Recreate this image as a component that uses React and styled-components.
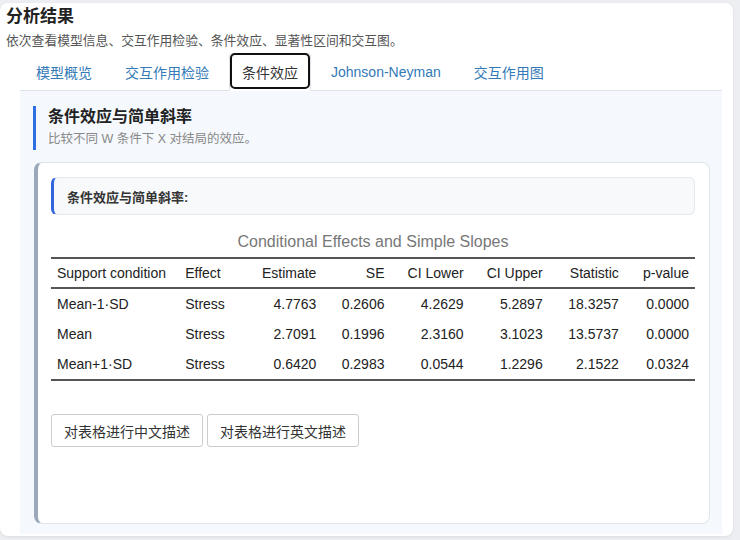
import React from "react";
import styled, { createGlobalStyle } from "styled-components";

const GlobalStyle = createGlobalStyle`
  html, body {
    margin: 0;
    padding: 0;
    background: #eceef1;
  }
  body {
    font-family: "Liberation Sans", "Noto Sans CJK SC", sans-serif;
    color: #222;
  }
`;

const Page = styled.div`
  height: 540px;
  display: flex;
  flex-direction: column;
  padding: 3px 7px 4px 0;
  box-sizing: border-box;
`;

const Card = styled.div`
  flex: 1;
  display: flex;
  flex-direction: column;
  background: #fff;
  border-radius: 8px;
  box-shadow: 0 1px 3px rgba(0, 0, 0, 0.08);
  padding: 3px 11px 2px 6px;
`;

const Title = styled.h2`
  margin: 0;
  font-size: 17px;
  line-height: 22px;
  font-weight: 700;
  color: #222;
`;

const Subtitle = styled.p`
  margin: 3px 0 0;
  font-size: 12.8px;
  line-height: 20px;
  color: #555;
`;

const TabArea = styled.div`
  flex: 1;
  display: flex;
  flex-direction: column;
  margin: 2px 0 0 14px;
`;

const TabList = styled.div`
  display: flex;
  gap: 7px;
  padding-left: 3px;
  border-bottom: 1px solid #dde2e8;
  height: 37px;
`;

const Tab = styled.div`
  position: relative;
  height: 38px;
  box-sizing: border-box;
  padding: 0 12px 1px;
  display: flex;
  align-items: center;
  font-size: 14px;
  color: ${(p) => (p.$active ? "#333" : "#337ab7")};
  background: ${(p) => (p.$active ? "#fff" : "transparent")};
  border: 1px solid ${(p) => (p.$active ? "#dde2e8" : "transparent")};
  border-bottom-color: transparent;
  border-radius: 4px 4px 0 0;
  margin-bottom: -1px;
  white-space: nowrap;

  &::after {
    content: "";
    display: ${(p) => (p.$active ? "block" : "none")};
    position: absolute;
    top: -1px;
    left: 0;
    right: 0;
    bottom: 1px;
    border: 2px solid #111;
    border-radius: 5px;
  }
`;

const Panel = styled.div`
  flex: 1;
  display: flex;
  flex-direction: column;
  background: #f5f9fd;
  padding: 15px 12px 10px 13px;
`;

const SectionHead = styled.div`
  border-left: 3px solid #2f6fe0;
  padding-left: 12px;
`;

const SectionTitle = styled.h3`
  margin: 0;
  font-size: 16px;
  line-height: 22px;
  font-weight: 700;
  color: #222;
`;

const SectionSub = styled.p`
  margin: 0;
  font-size: 12.5px;
  line-height: 22px;
  color: #888;
`;

const ResultCard = styled.div`
  flex: 1;
  margin-top: 12px;
  margin-left: 1px;
  background: #fff;
  border: 1px solid #dfe4ea;
  border-left: 4px solid #9aa8ba;
  border-radius: 8px;
  padding: 14px 14px 13px 13px;
`;

const Note = styled.div`
  height: 38px;
  box-sizing: border-box;
  display: flex;
  align-items: center;
  padding-left: 13px;
  background: #f8f9fb;
  border: 1px solid #e4e8ee;
  border-left: 3px solid #3366dd;
  border-radius: 6px;
  font-size: 13px;
  font-weight: 700;
  color: #333;
`;

const Table = styled.table`
  width: 100%;
  margin-top: 16px;
  border-collapse: collapse;
  table-layout: fixed;
  font-size: 14px;
  color: #222;
`;

const Caption = styled.caption`
  font-size: 16px;
  line-height: 22px;
  color: #777;
  padding-bottom: 4px;
`;

const HeadRow = styled.tr`
  border-top: 2px solid #555;
  border-bottom: 2px solid #555;
`;

const Th = styled.th`
  font-weight: 400;
  height: 28px;
  padding: 0 6px;
  text-align: ${(p) => (p.$left ? "left" : "right")};
  white-space: nowrap;
`;

const Row = styled.tr`
  border-bottom: ${(p) => (p.$last ? "2px solid #555" : "none")};
`;

const Td = styled.td`
  height: 30px;
  padding: 0 6px;
  text-align: ${(p) => (p.$left ? "left" : "right")};
  white-space: nowrap;
`;

const Actions = styled.div`
  display: flex;
  gap: 4px;
  margin-top: 33px;
`;

const Button = styled.button`
  height: 33px;
  padding: 0 12px;
  background: #fff;
  border: 1px solid #ccc;
  border-radius: 3px;
  font-family: "Liberation Sans", "Noto Sans CJK SC", sans-serif;
  font-size: 14px;
  color: #333;
  cursor: pointer;
`;

const tabs = ["模型概览", "交互作用检验", "条件效应", "Johnson-Neyman", "交互作用图"];

const widths = [128, 63, 80, 68, 79, 79, 76, 70];

const headers = [
  "Support condition",
  "Effect",
  "Estimate",
  "SE",
  "CI Lower",
  "CI Upper",
  "Statistic",
  "p-value",
];

const rows = [
  ["Mean-1·SD", "Stress", "4.7763", "0.2606", "4.2629", "5.2897", "18.3257", "0.0000"],
  ["Mean", "Stress", "2.7091", "0.1996", "2.3160", "3.1023", "13.5737", "0.0000"],
  ["Mean+1·SD", "Stress", "0.6420", "0.2983", "0.0544", "1.2296", "2.1522", "0.0324"],
];

export default function App() {
  return (
    <>
      <GlobalStyle />
      <Page>
        <Card>
          <Title>分析结果</Title>
          <Subtitle>依次查看模型信息、交互作用检验、条件效应、显著性区间和交互图。</Subtitle>
          <TabArea>
            <TabList>
              {tabs.map((t) => (
                <Tab key={t} $active={t === "条件效应"}>
                  {t}
                </Tab>
              ))}
            </TabList>
            <Panel>
              <SectionHead>
                <SectionTitle>条件效应与简单斜率</SectionTitle>
                <SectionSub>比较不同 W 条件下 X 对结局的效应。</SectionSub>
              </SectionHead>
              <ResultCard>
                <Note>条件效应与简单斜率:</Note>
                <Table>
                  <Caption>Conditional Effects and Simple Slopes</Caption>
                  <colgroup>
                    {widths.map((w, i) => (
                      <col key={i} style={{ width: w }} />
                    ))}
                  </colgroup>
                  <thead>
                    <HeadRow>
                      {headers.map((h, i) => (
                        <Th key={h} $left={i < 2}>
                          {h}
                        </Th>
                      ))}
                    </HeadRow>
                  </thead>
                  <tbody>
                    {rows.map((r, ri) => (
                      <Row key={ri} $last={ri === rows.length - 1}>
                        {r.map((c, i) => (
                          <Td key={i} $left={i < 2}>
                            {c}
                          </Td>
                        ))}
                      </Row>
                    ))}
                  </tbody>
                </Table>
                <Actions>
                  <Button>对表格进行中文描述</Button>
                  <Button>对表格进行英文描述</Button>
                </Actions>
              </ResultCard>
            </Panel>
          </TabArea>
        </Card>
      </Page>
    </>
  );
}
